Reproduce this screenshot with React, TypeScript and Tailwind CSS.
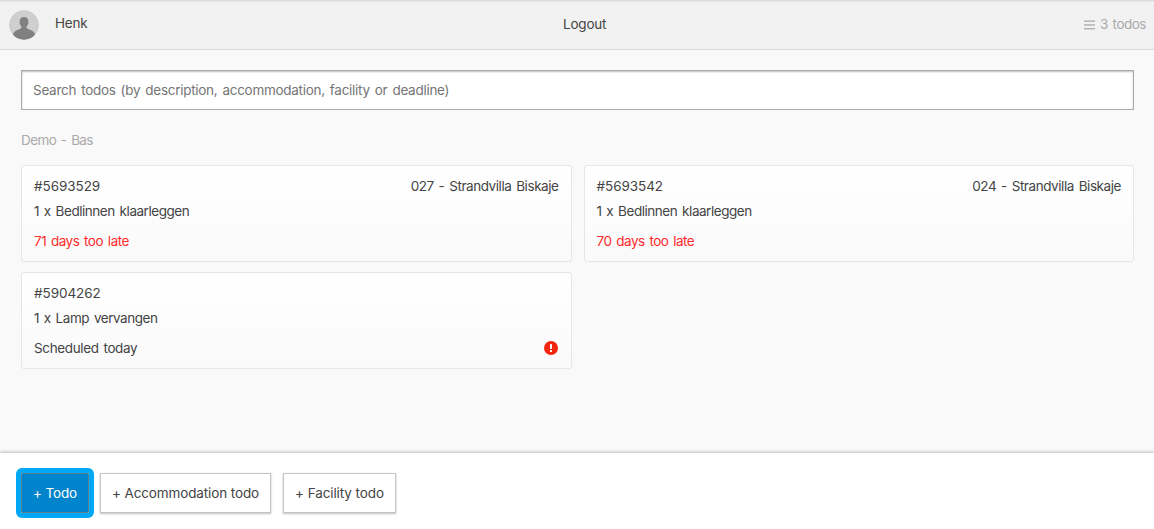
const Card = ({ id, desc, status, place, red, alert }: { id: string; desc: string; status: string; place?: string; red?: boolean; alert?: boolean }) => (
  <div className="h-[97px] rounded-[3px] border border-[#e6e6e6] bg-gradient-to-b from-white to-[#fafafa] px-3 pt-[11px] text-[13.5px] leading-[18px] text-[#444] [word-spacing:1.5px]">
    <div className="flex justify-between">
      <span className="tracking-[-0.06px]">{id}</span>
      {place && <span className="tracking-[-0.44px]">{place}</span>}
    </div>
    <div className="mt-[7px] tracking-[-0.46px]">{desc}</div>
    <div className="mt-3 flex items-center justify-between">
      <span className={red ? "tracking-[-0.5px] text-[#ff2a2a]" : "tracking-[-0.37px]"}>{status}</span>
      {alert && (
        <svg width="14" height="14" viewBox="0 0 14 14" className="mr-px">
          <circle cx="7" cy="7" r="7" fill="#f5260f" />
          <rect x="6" y="3" width="2" height="5" rx="0.6" fill="#fff" />
          <rect x="6" y="9" width="2" height="2" rx="0.6" fill="#fff" />
        </svg>
      )}
    </div>
  </div>
);

export default function App() {
  return (
    <div className="flex h-[529px] flex-col overflow-hidden bg-[#f9f9f9] font-['Inter',sans-serif] text-[13.5px] text-[#444] [word-spacing:1.5px]">
      <header className="relative flex h-[50px] shrink-0 items-center justify-between border-b border-[#d9d9d9] bg-[#f2f2f2] pr-2 pl-[9px] shadow-[inset_0_2px_2px_-1px_#d4d4d4]">
        <div className="flex items-center gap-4">
          <svg width="30" height="30" viewBox="0 0 30 30" className="rounded-full">
            <circle cx="15" cy="15" r="15" fill="#cfcfcf" />
            <path d="M15 7c-3 0-4.6 2.2-4.4 5 .1 1.8.7 3.3 1.6 4.3.4.5.4 1.7-.3 2.2-1.6 1-5.6 1.7-6.9 3.7-.6 1-1 2.6-1 2.8a15 15 0 0 0 22 0c0-.2-.4-1.8-1-2.8-1.3-2-5.3-2.7-6.9-3.7-.7-.5-.7-1.7-.3-2.2.9-1 1.5-2.5 1.6-4.3.2-2.8-1.4-5-4.4-5z" fill="#808080" />
          </svg>
          <span className="-mt-1 leading-5 tracking-[-0.2px]">Henk</span>
        </div>
        <span className="absolute left-[563px] top-[14px] leading-5 tracking-[-0.2px]">Logout</span>
        <div className="flex items-center gap-[5px] text-[#aaa]">
          <svg width="11" height="10" viewBox="0 0 11 10" fill="#aaa">
            <rect y="0.5" width="11" height="1.3" />
            <rect y="4.3" width="11" height="1.3" />
            <rect y="8.1" width="11" height="1.3" />
          </svg>
          <span className="tracking-[-0.5px]">3 todos</span>
        </div>
      </header>

      <main className="flex-1 pr-5 pl-[21px] pt-5">
        <div className="flex h-10 items-center border border-[#aaa] bg-white px-[11px] tracking-[-0.28px] text-[#757575] shadow-[inset_0_1px_2px_rgba(0,0,0,0.25)]">
          Search todos (by description, accommodation, facility or deadline)
        </div>
        <div className="mt-5 leading-5 tracking-[-0.6px] text-[#aaa]">Demo - Bas</div>
        <div className="mt-[15px] grid grid-cols-2 gap-x-3 gap-y-[10px]">
          <Card id="#5693529" place="027 - Strandvilla Biskaje" desc="1 x Bedlinnen klaarleggen" status="71 days too late" red />
          <Card id="#5693542" place="024 - Strandvilla Biskaje" desc="1 x Bedlinnen klaarleggen" status="70 days too late" red />
          <Card id="#5904262" desc="1 x Lamp vervangen" status="Scheduled today" alert />
        </div>
      </main>

      <footer className="flex h-[76px] shrink-0 items-center gap-3 bg-white pt-[4px] pl-[21px] shadow-[0_-1px_3px_rgba(0,0,0,0.25)]">
        <button className="mr-[-1px] flex h-10 w-[68px] items-center justify-center rounded-[1px] border border-[#5d7f93] bg-[#0085cc] tracking-[-0.1px] text-white outline-[5px] outline-[#00a8f5] outline-solid">+ Todo</button>
        <button className="h-10 w-[171px] border border-[#c4c4c4] bg-white tracking-[-0.12px] shadow-[0_1px_2px_rgba(0,0,0,0.25)]">+ Accommodation todo</button>
        <button className="h-10 w-[113px] border border-[#c4c4c4] bg-white tracking-[-0.1px] shadow-[0_1px_2px_rgba(0,0,0,0.25)]">+ Facility todo</button>
      </footer>
    </div>
  );
}
